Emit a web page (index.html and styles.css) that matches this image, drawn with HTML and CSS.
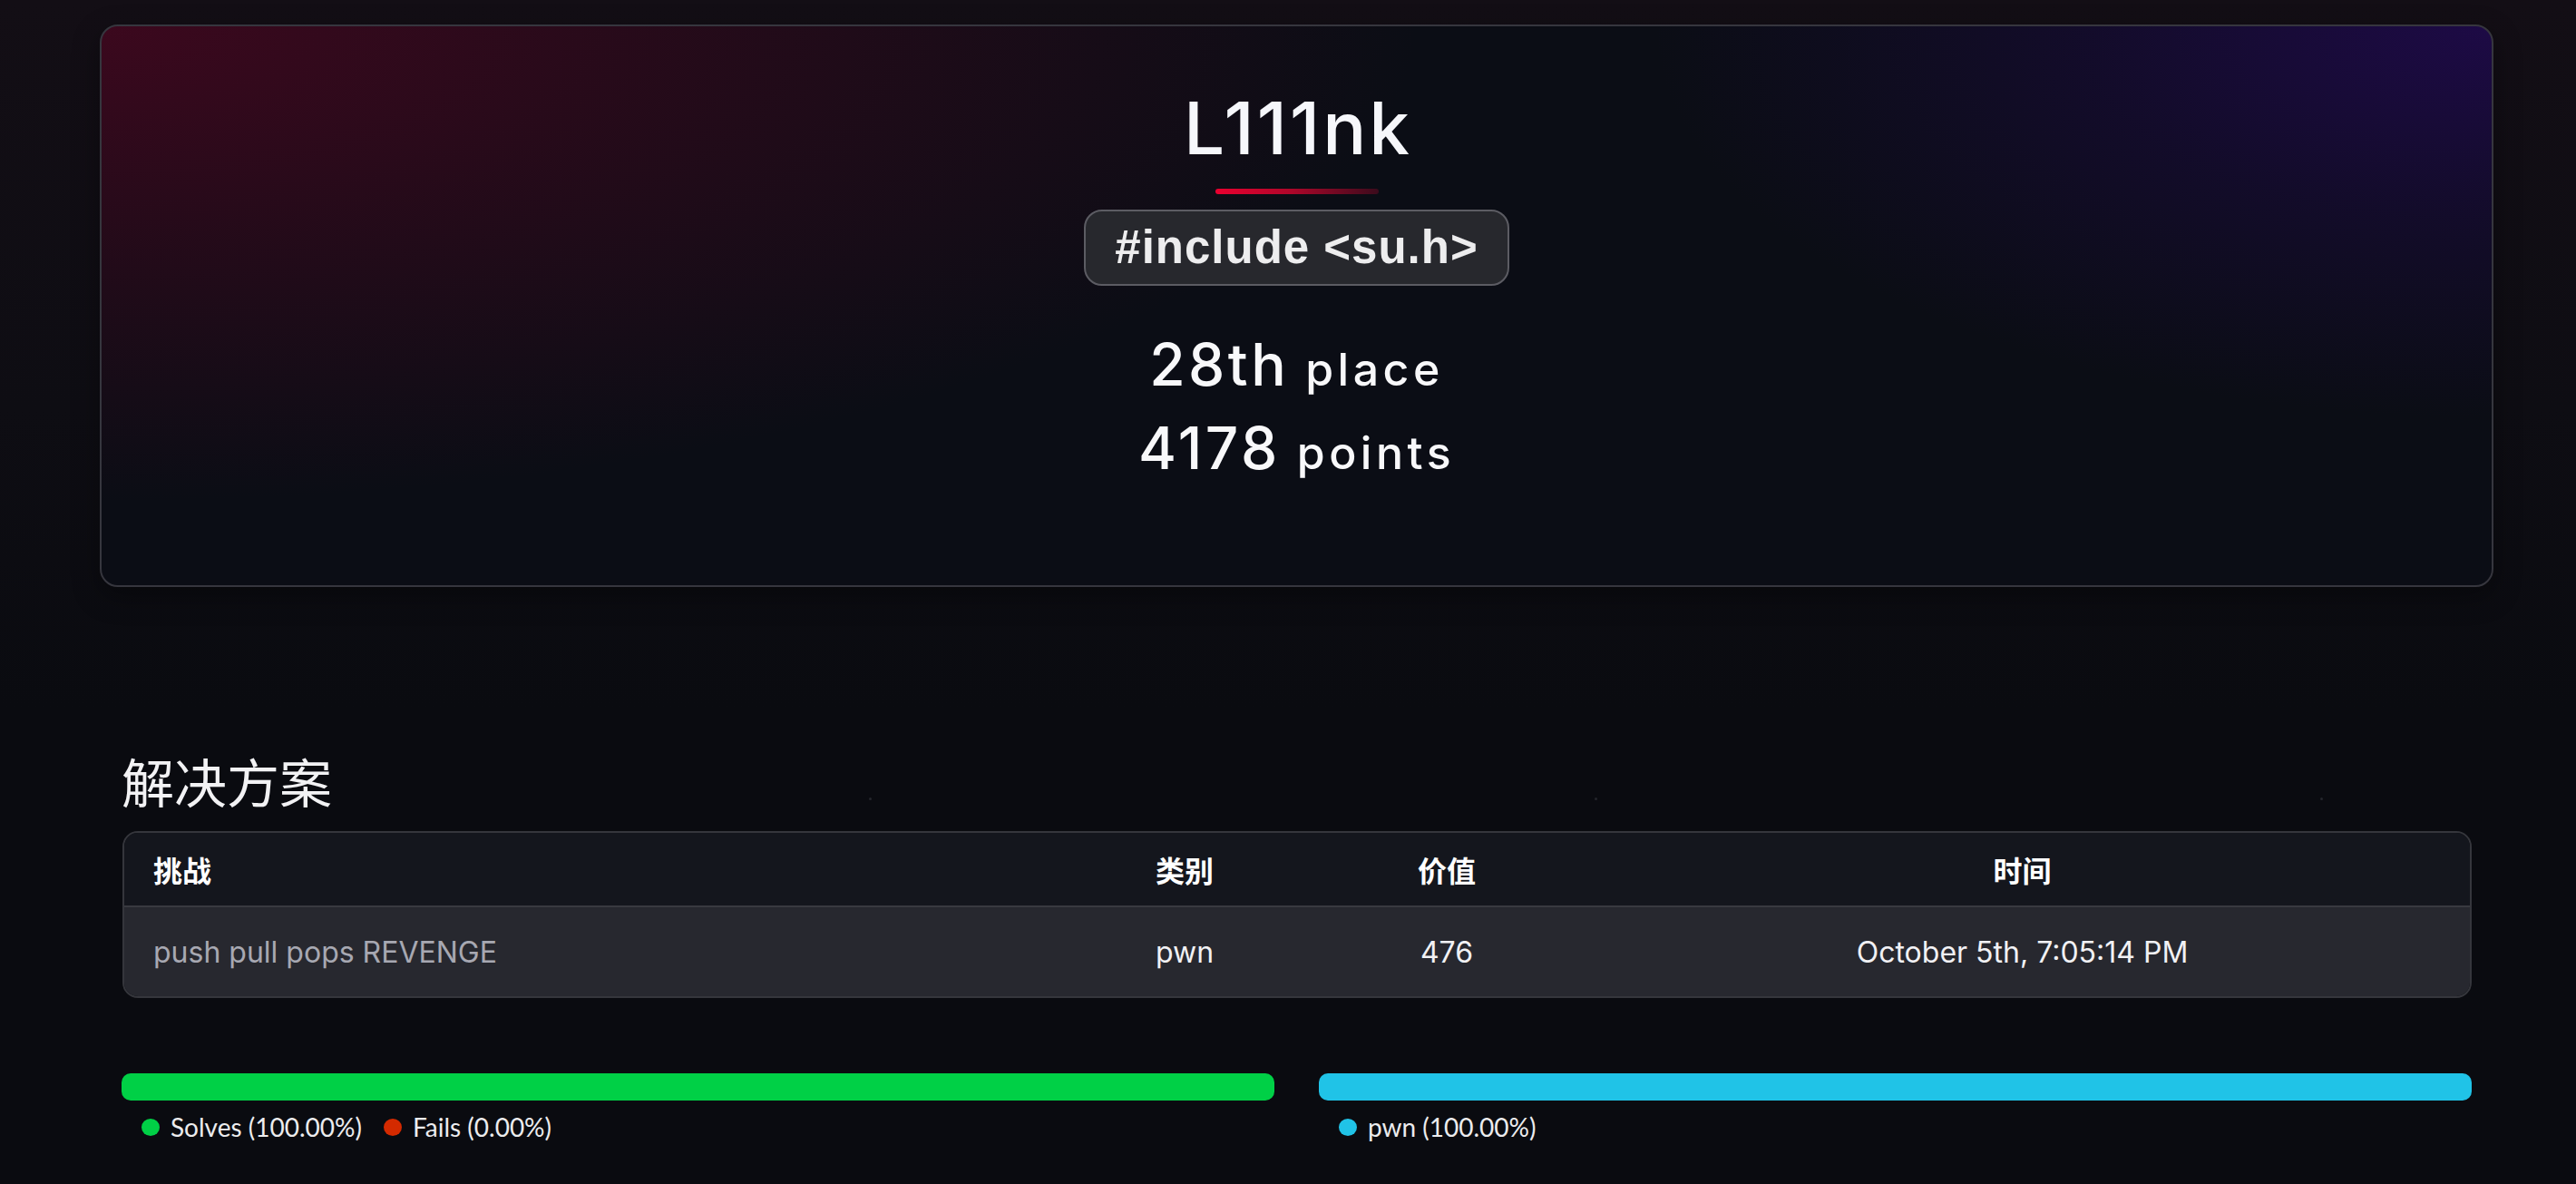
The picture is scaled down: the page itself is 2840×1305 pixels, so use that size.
FILE: index.html
```html
<!DOCTYPE html>
<html lang="zh">
<head>
<meta charset="utf-8">
<title>L111nk</title>
<link rel="stylesheet" href="styles.css">
</head>
<body>
<div class="page">
  <header class="team-card">
    <h1 class="team-name">L111nk</h1>
    <div class="accent"></div>
    <div class="badge">#include &lt;su.h&gt;</div>
    <div class="stats">
      <div class="stat"><span class="big">28th</span> <span class="small">place</span></div>
      <div class="stat"><span class="big">4178</span> <span class="small">points</span></div>
    </div>
  </header>

  <section class="content">
    <div class="heading-row">
      <h2 class="section-title">解决方案</h2>
      <span class="dot"></span>
      <span class="dot"></span>
      <span class="dot"></span>
    </div>

    <div class="table">
      <div class="row head">
        <div class="cell first">挑战</div>
        <div class="cell">类别</div>
        <div class="cell">价值</div>
        <div class="cell">时间</div>
      </div>
      <div class="row data">
        <div class="cell first challenge">push pull pops REVENGE</div>
        <div class="cell">pwn</div>
        <div class="cell">476</div>
        <div class="cell">October 5th, 7:05:14 PM</div>
      </div>
    </div>

    <div class="charts">
      <div class="chart">
        <div class="bar green"></div>
        <div class="legend">
          <span class="legend-item"><span class="ldot green"></span>Solves (100.00%)</span>
          <span class="legend-item"><span class="ldot red"></span>Fails (0.00%)</span>
        </div>
      </div>
      <div class="chart">
        <div class="bar cyan"></div>
        <div class="legend">
          <span class="legend-item"><span class="ldot cyan"></span>pwn (100.00%)</span>
        </div>
      </div>
    </div>
  </section>
</div>
</body>
</html>
```

FILE: styles.css
```css
* { box-sizing: border-box; }

html, body {
  margin: 0;
  padding: 0;
}

body {
  min-height: 1305px;
  background-color: #0a0b10;
  background-image: linear-gradient(180deg, #130e15 0px, #0e0d13 450px, #0a0b10 780px);
  font-family: Inter, "Noto Sans CJK SC", sans-serif;
  color: #f3f4f7;
}

.page {
  padding: 27px 0 0 110px;
}

/* ---------- team card ---------- */
.team-card {
  width: 2639px;
  height: 620px;
  border: 2px solid #36363e;
  border-radius: 20px;
  background:
    radial-gradient(ellipse 55% 85% at 0% 0%, rgba(62, 8, 30, 0.95) 0%, rgba(62, 8, 30, 0.5) 45%, rgba(62, 8, 30, 0) 100%),
    radial-gradient(ellipse 35% 70% at 100% 0%, rgba(30, 10, 72, 0.95) 0%, rgba(30, 10, 72, 0.4) 50%, rgba(30, 10, 72, 0) 100%),
    #0b0d15;
  box-shadow: 0 10px 30px rgba(0, 0, 0, 0.35);
  display: flex;
  flex-direction: column;
  align-items: center;
  padding-top: 73px;
}

.team-name {
  margin: 0;
  font-family: Inter, sans-serif;
  font-size: 80px;
  line-height: 78px;
  font-weight: 500;
  letter-spacing: 3px;
  padding-left: 3px;
  color: #f6f7fb;
}

.accent {
  width: 180px;
  height: 6px;
  margin-top: 28px;
  border-radius: 3px;
  background: linear-gradient(90deg, #ea002f 0%, #b0062a 45%, #3b0b1c 100%);
}

.badge {
  margin-top: 17px;
  height: 84px;
  padding: 0 32px;
  border: 2px solid #5c5c63;
  border-radius: 20px;
  background: #27282d;
  font-family: "Liberation Sans", Arial, sans-serif;
  font-weight: 700;
  font-size: 51px;
  line-height: 80px;
  letter-spacing: 1px;
  color: #ededee;
}

.stats {
  margin-top: 41px;
  text-align: center;
  font-size: 64px;
  line-height: 92px;
  color: #f8f8fa;
}

.stat {
  height: 92px;
  line-height: 92px;
}

.big {
  font-size: 64px;
  line-height: 1;
  font-weight: 500;
  letter-spacing: 3.5px;
}

.small {
  font-size: 50px;
  line-height: 1;
  font-weight: 500;
  letter-spacing: 4.5px;
}

/* ---------- content ---------- */
.content {
  width: 2639px;
  padding: 0 24px;
}

.heading-row {
  margin-top: 184px;
  display: flex;
  align-items: flex-end;
}

.section-title {
  flex: 0 0 824px;
  margin: 0;
  font-family: "Noto Sans CJK SC", sans-serif;
  font-weight: 400;
  font-size: 58px;
  line-height: 58px;
  white-space: nowrap;
  color: #f2f2f4;
}

.dot {
  flex: 0 0 3px;
  height: 3px;
  margin-bottom: 7px;
  margin-right: 797px;
  border-radius: 50%;
  background: #25262c;
}

.dot:last-child {
  margin-right: 0;
}

.table {
  margin-top: 27px;
  margin-left: 1px;
  border: 2px solid #35363c;
  border-radius: 17px;
  overflow: hidden;
}

.row {
  display: grid;
  grid-template-columns: 1021px 296px 282px 1fr;
  align-items: center;
}

.cell {
  text-align: center;
  white-space: nowrap;
}

.cell.first {
  text-align: left;
  padding-left: 32px;
}

.head {
  height: 82px;
  background: #14161d;
  border-bottom: 2px solid #393a40;
  font-family: "Noto Sans CJK SC", sans-serif;
  font-weight: 700;
  font-size: 32px;
  color: #ffffff;
}

.data {
  height: 98px;
  background: #27282f;
  font-family: Inter, sans-serif;
  font-size: 32px;
  color: #f1f1f4;
}

.challenge {
  color: #a7a8b2;
}

/* ---------- charts ---------- */
.charts {
  margin-top: 83px;
  display: grid;
  grid-template-columns: 1fr 1fr;
  column-gap: 49px;
}

.bar {
  height: 30px;
  border-radius: 10px;
}

.bar.green { background: #00d046; }
.bar.cyan { background: #20c3e7; }

.legend {
  margin-top: 14px;
  padding-left: 22px;
  display: flex;
  align-items: center;
  gap: 24px;
  font-family: Lato, sans-serif;
  font-size: 28px;
  line-height: 30px;
  color: #ececee;
}

.legend-item {
  display: flex;
  align-items: center;
  gap: 12px;
}

.ldot {
  width: 20px;
  height: 19px;
  border-radius: 50%;
}

.ldot.green { background: #00d046; }
.ldot.red { background: #d42a00; }
.ldot.cyan { background: #20c3e7; }
```
